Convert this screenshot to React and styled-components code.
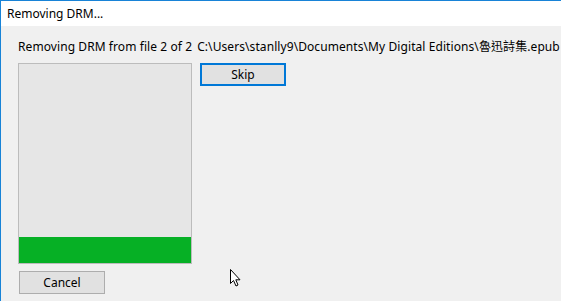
import styled, { createGlobalStyle } from "styled-components";

const GlobalStyle = createGlobalStyle`
  html, body {
    margin: 0;
    padding: 0;
    background: #f0f0f0;
    overflow: hidden;
  }
  body {
    font-family: "Noto Sans", "Noto Sans CJK TC", sans-serif;
    font-size: 12px;
    color: #000;
  }
`;

const Window = styled.div`
  position: relative;
  width: 561px;
  height: 301px;
  box-sizing: border-box;
  border-left: 1px solid #1883d7;
  border-top: 1px solid #1883d7;
  display: flex;
  flex-direction: column;
  background: #f0f0f0;
`;

const TitleBar = styled.div`
  height: 25px;
  background: #fff;
  display: flex;
  align-items: center;
  padding-left: 6px;
  font-size: 12px;
  color: #000;
`;

const Body = styled.div`
  flex: 1;
  padding: 13px 0 0 17px;
  display: flex;
  flex-direction: column;
`;

const Status = styled.div`
  height: 16px;
  line-height: 16px;
  white-space: nowrap;
  font-family: "Noto Sans", "Noto Sans CJK TC", sans-serif;
  letter-spacing: 0.08px;
`;

const Path = styled.span`
  margin-left: 5px;
`;

const Row = styled.div`
  display: flex;
  align-items: flex-start;
  gap: 8px;
  margin-top: 8px;
`;

const Progress = styled.div`
  width: 174px;
  height: 201px;
  box-sizing: border-box;
  border: 1px solid #bcbcbc;
  background: #e6e6e6;
  display: flex;
  flex-direction: column;
  justify-content: flex-end;
`;

const Fill = styled.div`
  background: #06b025;
`;

const Button = styled.button`
  box-sizing: border-box;
  width: 86px;
  height: 23px;
  padding: 0;
  background: #e1e1e1;
  border: ${(p) => (p.$focused ? "2px solid #0078d7" : "1px solid #adadad")};
  font-family: "Noto Sans", sans-serif;
  font-size: 12px;
  color: #000;
  margin-top: ${(p) => p.$top || 0}px;
  margin-left: ${(p) => p.$left || 0}px;
`;

const Cursor = styled.svg`
  position: absolute;
  left: 228px;
  top: 267px;
`;

export default function App() {
  return (
    <>
      <GlobalStyle />
      <Window>
        <TitleBar>Removing DRM...</TitleBar>
        <Body>
          <Status>
            Removing DRM from file 2 of 2
            <Path>C:\Users\stanlly9\Documents\My Digital Editions\魯迅詩集.epub</Path>
          </Status>
          <Row>
            <Progress>
              <Fill style={{ height: `${(26 / 199) * 100}%` }} />
            </Progress>
            <Button $focused>Skip</Button>
          </Row>
          <Button $top={7} $left={1}>Cancel</Button>
        </Body>
        <Cursor width="14" height="20" viewBox="0 0 14 20">
          <path
            d="M1.5 1.5 L1.5 15.5 L4.5 12.5 L7 18 L9 17 L6.8 11.8 L11 11.8 Z"
            fill="#fff"
            stroke="#000"
            strokeWidth="1"
            strokeLinejoin="miter"
          />
        </Cursor>
      </Window>
    </>
  );
}
